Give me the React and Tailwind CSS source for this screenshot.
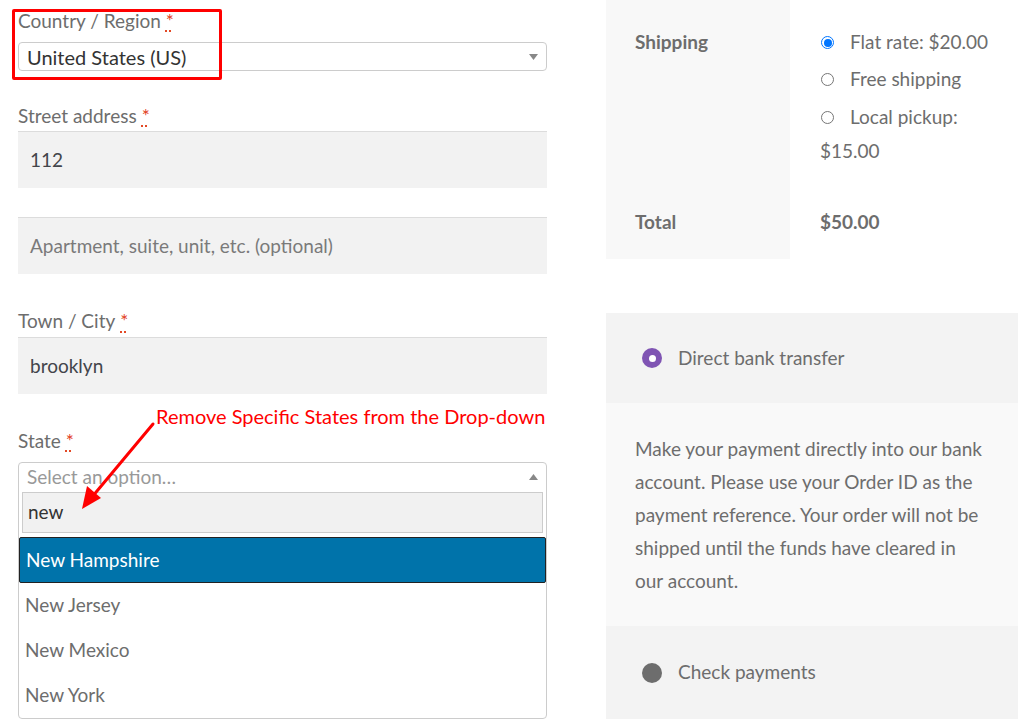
import React from "react";

const font = { fontFamily: "Lato, 'Liberation Sans', sans-serif" };

function Star() {
  return (
    <span className="ml-[5px] text-[#e2401c] underline decoration-dotted decoration-[#e2401c] underline-offset-[3px]">*</span>
  );
}

function Label({ children }) {
  return (
    <div className="h-[27px] leading-[27px] text-[19px] text-[#6d6d6d]">
      {children}
      <Star />
    </div>
  );
}

function Arrow({ up }) {
  return (
    <svg width="9" height="6" viewBox="0 0 9 6" className="absolute right-[8px] top-1/2 -translate-y-1/2">
      {up ? <path d="M0 6 L4.5 0 L9 6 Z" fill="#888" /> : <path d="M0 0 L4.5 6 L9 0 Z" fill="#888" />}
    </svg>
  );
}

function Radio({ checked }) {
  return checked ? (
    <span className="inline-flex w-[13px] h-[13px] rounded-full border border-[#0075ff] items-center justify-center align-middle">
      <span className="w-[8px] h-[8px] rounded-full bg-[#0075ff]" />
    </span>
  ) : (
    <span className="inline-block w-[13px] h-[13px] rounded-full border border-[#767676] bg-white align-middle" />
  );
}

export default function App() {
  return (
    <div className="relative w-[1024px] h-[719px] overflow-hidden bg-white flex" style={font}>
      {/* Left column */}
      <div className="ml-[18px] w-[529px] pt-[7px] flex flex-col">
        <Label>Country / Region</Label>
        <div className="relative mt-[8px] h-[29px] border border-[#ccc] rounded-[4px] pl-[8px] flex items-center text-[20px] text-[#333]">
          United States (US)
          <Arrow />
        </div>

        <div className="mt-[31px]">
          <Label>Street address</Label>
        </div>
        <div className="mt-[2px] h-[57px] bg-[#f2f2f2] border-t border-[#dcdcdc] pl-[12px] flex items-center text-[19px] text-[#43454b]">
          112
        </div>
        <div className="mt-[29px] h-[58px] bg-[#f2f2f2] border-t border-[#dcdcdc] pl-[12px] flex items-center text-[19px] text-[#7a7a7a]">
          Apartment, suite, unit, etc. (optional)
        </div>

        <div className="mt-[33px]">
          <Label>Town / City</Label>
        </div>
        <div className="mt-[3px] h-[57px] bg-[#f2f2f2] border-t border-[#dcdcdc] pl-[12px] flex items-center text-[19px] text-[#43454b]">
          brooklyn
        </div>

        <div className="mt-[33px]">
          <Label>State</Label>
        </div>
        <div className="mt-[8px] border border-[#ccc] rounded-[4px] flex flex-col">
          <div className="relative h-[28px] pl-[8px] flex items-center text-[19px] text-[#999]">
            Select an option…
            <Arrow up />
          </div>
          <div className="px-[3px] pt-[1px] pb-[4px]">
            <div className="h-[41px] bg-[#f1f1f1] border border-[#ccc] pl-[5px] flex items-center text-[19px] text-[#333]">
              new
            </div>
          </div>
          <div className="h-[46px] bg-[#0073aa] border border-[#222] rounded-[2px] pl-[6px] flex items-center text-[19px] text-white">
            New Hampshire
          </div>
          <div className="h-[45px] pl-[6px] flex items-center text-[19px] text-[#6d6d6d]">New Jersey</div>
          <div className="h-[45px] pl-[6px] flex items-center text-[19px] text-[#6d6d6d]">New Mexico</div>
          <div className="h-[45px] pl-[6px] flex items-center text-[19px] text-[#6d6d6d]">New York</div>
        </div>
      </div>

      {/* Right column */}
      <div className="ml-[59px] w-[412px] flex flex-col">
        <div className="flex h-[259px]">
          <div className="w-[184px] bg-[#f8f8f8] pl-[29px] flex flex-col text-[19px] font-bold text-[#6d6d6d]">
            <div className="pt-[28px] h-[185px] leading-[27px]">Shipping</div>
            <div className="pt-[23px] leading-[27px]">Total</div>
          </div>
          <div className="flex-1 pl-[30px] flex flex-col text-[19px] text-[#6d6d6d]">
            <div className="h-[185px] pt-[24px]">
              <div className="h-[37px] flex items-center gap-[16px] pl-[1px]"><Radio checked /><span>Flat rate: $20.00</span></div>
              <div className="h-[37px] flex items-center gap-[16px] pl-[1px]"><Radio /><span>Free shipping</span></div>
              <div className="h-[38px] flex items-center gap-[16px] pl-[1px]"><Radio /><span>Local pickup:</span></div>
              <div className="h-[30px] leading-[30px]">$15.00</div>
            </div>
            <div className="pt-[23px] leading-[27px] font-bold">$50.00</div>
          </div>
        </div>

        <div className="mt-[54px] flex flex-col text-[19px] text-[#6d6d6d]">
          <div className="h-[90px] bg-[#f3f3f3] pl-[36px] flex items-center gap-[16px]">
            <span className="w-[20px] h-[20px] rounded-full bg-[#7f54b3] flex items-center justify-center">
              <span className="w-[7px] h-[7px] rounded-full bg-white" />
            </span>
            Direct bank transfer
          </div>
          <div className="h-[223px] bg-[#f9f9f9] pl-[29px] pt-[29px] leading-[33px] text-[19px]">
            Make your payment directly into our bank<br />
            account. Please use your Order ID as the<br />
            payment reference. Your order will not be<br />
            shipped until the funds have cleared in<br />
            our account.
          </div>
          <div className="h-[93px] bg-[#f3f3f3] pl-[36px] flex items-center gap-[16px]">
            <span className="w-[20px] h-[20px] rounded-full bg-[#6d6d6d]" />
            Check payments
          </div>
        </div>
      </div>

      {/* Annotations */}
      <div className="absolute left-[12px] top-[9px] w-[210px] h-[71px] border-[3px] border-[#ff0000] rounded-[2px]" />
      <div className="absolute left-[156px] top-[403px] text-[20px] leading-[26px] text-[#f00] whitespace-nowrap">
        Remove Specific States from the Drop-down
      </div>
      <svg className="absolute left-0 top-0" width="200" height="600" viewBox="0 0 200 600">
        <line x1="153" y1="424" x2="92" y2="497" stroke="#f00" strokeWidth="3" strokeLinecap="round" />
        <path d="M82 509 L87 486 L101 498 Z" fill="#f00" />
      </svg>
    </div>
  );
}
